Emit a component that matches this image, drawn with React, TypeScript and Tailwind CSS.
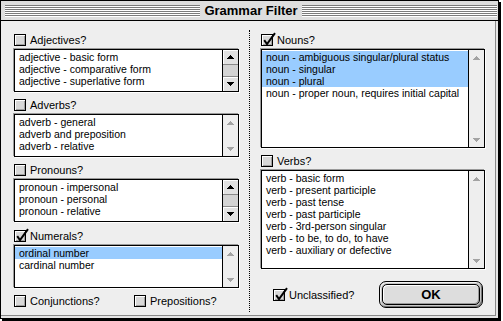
import React from "react";

function Arrow({ dir, active }: { dir: "up" | "down"; active: boolean }) {
  const fill = active ? "#000000" : "#a3a3a3";
  const rows = dir === "up" ? [0, 1, 2, 3] : [3, 2, 1, 0];
  return (
    <svg width="7" height="4" viewBox="0 0 7 4" shapeRendering="crispEdges">
      {rows.map((w, i) => (
        <rect key={i} x={3 - w} y={i} width={w * 2 + 1} height={1} fill={fill} />
      ))}
    </svg>
  );
}

function ScrollBar({ active }: { active: boolean }) {
  return (
    <div
      className={
        active
          ? "w-[16px] shrink-0 flex flex-col justify-between border-l border-black bg-[#d4d4d4]"
          : "w-[16px] shrink-0 flex flex-col justify-between border-l border-black bg-[#eeeeee]"
      }
    >
      <div
        className={
          active
            ? "h-[15px] flex items-center justify-center bg-[#e2e2e2] border-b border-[#8a8a8a] shadow-[inset_1px_1px_0_#ffffff]"
            : "h-[15px] flex items-center justify-center"
        }
      >
        <Arrow dir="up" active={active} />
      </div>
      <div
        className={
          active
            ? "h-[15px] flex items-center justify-center bg-[#e2e2e2] border-t border-[#8a8a8a] shadow-[inset_1px_1px_0_#ffffff]"
            : "h-[15px] flex items-center justify-center"
        }
      >
        <Arrow dir="down" active={active} />
      </div>
    </div>
  );
}

function ListBox({
  items,
  selected = [],
  tall = false,
  active = false,
}: {
  items: string[];
  selected?: number[];
  tall?: boolean;
  active?: boolean;
}) {
  return (
    <div
      className={
        tall
          ? "h-[99px] flex border border-black bg-white shadow-[-1px_-1px_0_#9a9a9a,1px_1px_0_#ffffff]"
          : "h-[43px] flex border border-black bg-white shadow-[-1px_-1px_0_#9a9a9a,1px_1px_0_#ffffff]"
      }
    >
      <div className="flex-1 pt-[1px] overflow-hidden">
        {items.map((t, i) => (
          <div
            key={i}
            className={
              selected.includes(i)
                ? "h-[12px] leading-[13px] pl-[4px] bg-[#99ccff] text-black whitespace-nowrap"
                : "h-[12px] leading-[13px] pl-[4px] text-black whitespace-nowrap"
            }
          >
            {t}
          </div>
        ))}
      </div>
      <ScrollBar active={active} />
    </div>
  );
}

function CheckBox({ checked = false }: { checked?: boolean }) {
  return (
    <div className="relative w-[12px] h-[12px] shrink-0 border border-black bg-[#d8d8d8] shadow-[inset_1px_1px_0_#ffffff,inset_-1px_-1px_0_#a0a0a0]">
      {checked && (
        <svg
          className="absolute top-[-3px] left-0"
          width="14"
          height="14"
          viewBox="0 0 14 14"
        >
          <path d="M2.2 8.2 L5 12 L13 1.2" stroke="#000" strokeWidth="2" fill="none" />
        </svg>
      )}
    </div>
  );
}

function CheckRow({ label, checked = false }: { label: string; checked?: boolean }) {
  return (
    <div className="h-[12px] flex items-center gap-[4px]">
      <CheckBox checked={checked} />
      <span className="text-[11px] leading-[12px] text-black">{label}</span>
    </div>
  );
}

function Stripes() {
  return (
    <div className="flex-1 flex flex-col">
      {[0, 1, 2, 3, 4, 5].map((i) => (
        <div key={i} className="h-[2px] border-t border-[#7b7b7b] bg-white" />
      ))}
    </div>
  );
}

export default function App() {
  return (
    <div className="w-[503px] h-[321px] bg-white font-['Liberation_Sans',Arial,sans-serif]">
      <div className="w-[499px] h-[319px] border border-black shadow-[2px_2px_0_#000000] flex flex-col bg-[#e6e6e6]">
        {/* Title bar */}
        <div className="h-[20px] shrink-0 flex items-center bg-[#dedede] border-b border-black pl-[4px] pr-[1px] pt-[1px]">
          <Stripes />
          <div className="px-[4px] text-[13px] font-bold leading-[16px] text-black">Grammar Filter</div>
          <Stripes />
        </div>
        {/* Content */}
        <div className="flex-1 flex pr-[2px] pb-[2px]">
          <div className="flex-1 flex bg-[#eeeeee] border-r border-b border-[#8a8a8a] pl-[13px] pr-[10px] pt-[13px] pb-[3px] text-[10.5px]">
            {/* Left column */}
            <div className="w-[225px] flex flex-col">
              <CheckRow label="Adjectives?" />
              <div className="mt-[3px]">
                <ListBox
                  active
                  items={[
                    "adjective - basic form",
                    "adjective - comparative form",
                    "adjective - superlative form",
                  ]}
                />
              </div>
              <div className="mt-[7px]">
                <CheckRow label="Adverbs?" />
              </div>
              <div className="mt-[3px]">
                <ListBox items={["adverb - general", "adverb and preposition", "adverb - relative"]} />
              </div>
              <div className="mt-[7px]">
                <CheckRow label="Pronouns?" />
              </div>
              <div className="mt-[3px]">
                <ListBox
                  active
                  items={["pronoun - impersonal", "pronoun - personal", "pronoun - relative"]}
                />
              </div>
              <div className="mt-[8px]">
                <CheckRow label="Numerals?" checked />
              </div>
              <div className="mt-[3px]">
                <ListBox items={["ordinal number", "cardinal number"]} selected={[0]} />
              </div>
              <div className="mt-[7px] flex">
                <div className="w-[120px]">
                  <CheckRow label="Conjunctions?" />
                </div>
                <CheckRow label="Prepositions?" />
              </div>
            </div>
            {/* Divider */}
            <div className="ml-[10px] mr-[11px] -mt-[4px] border-l border-dotted border-black" />
            {/* Right column */}
            <div className="w-[224px] flex flex-col">
              <CheckRow label="Nouns?" checked />
              <div className="mt-[3px]">
                <ListBox
                  tall
                  items={[
                    "noun - ambiguous singular/plural status",
                    "noun - singular",
                    "noun - plural",
                    "noun - proper noun, requires initial capital",
                  ]}
                  selected={[0, 1, 2]}
                />
              </div>
              <div className="mt-[7px]">
                <CheckRow label="Verbs?" />
              </div>
              <div className="mt-[3px]">
                <ListBox
                  tall
                  items={[
                    "verb - basic form",
                    "verb - present participle",
                    "verb - past tense",
                    "verb - past participle",
                    "verb - 3rd-person singular",
                    "verb - to be, to do, to have",
                    "verb - auxiliary or defective",
                  ]}
                />
              </div>
              <div className="mt-[12px] h-[27px] flex items-center pr-[2px]">
                <div className="ml-[12px]">
                  <CheckRow label="Unclassified?" checked />
                </div>
                <div className="ml-auto w-[104px] h-[27px] rounded-[7px] border border-black bg-[#c8c8c8] shadow-[inset_1px_1px_0_#f4f4f4,inset_-1px_-1px_0_#777777] p-[2px] flex">
                  <div className="flex-1 rounded-[5px] border border-black bg-[#dddddd] shadow-[inset_1px_1px_0_#ffffff,inset_-1px_-1px_0_#9a9a9a] flex items-center justify-center text-[13px] font-bold text-black">
                    OK
                  </div>
                </div>
              </div>
            </div>
          </div>
        </div>
      </div>
    </div>
  );
}
